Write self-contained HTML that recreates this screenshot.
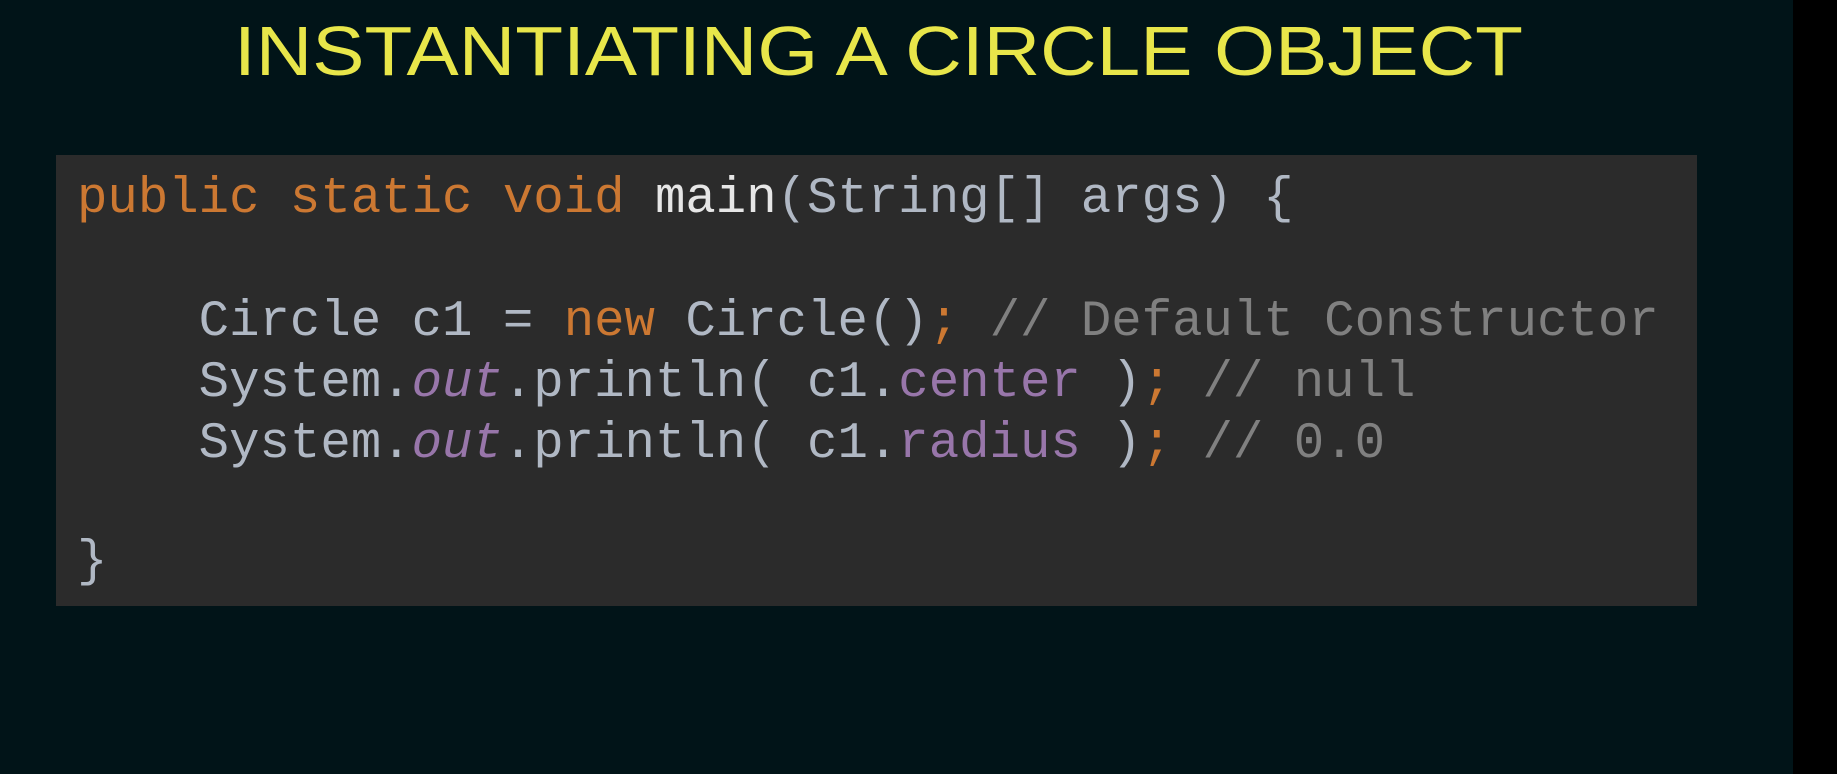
<!DOCTYPE html>
<html><head><meta charset="utf-8"><style>
html,body{margin:0;padding:0}
body{width:1837px;height:774px;background:#011418;position:relative;overflow:hidden}
.strip{position:absolute;left:1793px;top:0;width:44px;height:774px;background:#000}
.box{position:absolute;left:56px;top:155px;width:1641px;height:451px;background:#2b2b2b}
.l{position:absolute;left:77px;font-family:"Liberation Mono",monospace;font-size:50.7px;white-space:pre;color:#b0b8c4;line-height:1}
.k{color:#cc7832}.p{color:#9876aa}.pi{color:#9876aa;font-style:italic}.c{color:#808080}
</style></head><body>
<div class="strip"></div>
<svg style="position:absolute;left:0;top:0" width="1837" height="120">
<text x="234" y="75" textLength="1289" lengthAdjust="spacingAndGlyphs" font-family="Liberation Sans, sans-serif" font-size="70" fill="#e8e64a">INSTANTIATING A CIRCLE OBJECT</text>
</svg>
<div class="box"></div>
<div class="l" style="top:175px"><span class="k">public static void</span> <span style="color:#e6e6e6">main</span>(String[] args) {</div>
<div class="l" style="top:298px">    Circle c1 = <span class="k">new</span> Circle()<span class="k">;</span> <span class="c">// Default Constructor</span></div>
<div class="l" style="top:359px">    System.<span class="pi">out</span>.println( c1.<span class="p">center</span> )<span class="k">;</span> <span class="c">// null</span></div>
<div class="l" style="top:420px">    System.<span class="pi">out</span>.println( c1.<span class="p">radius</span> )<span class="k">;</span> <span class="c">// 0.0</span></div>
<div class="l" style="top:538px">}</div>
</body></html>
